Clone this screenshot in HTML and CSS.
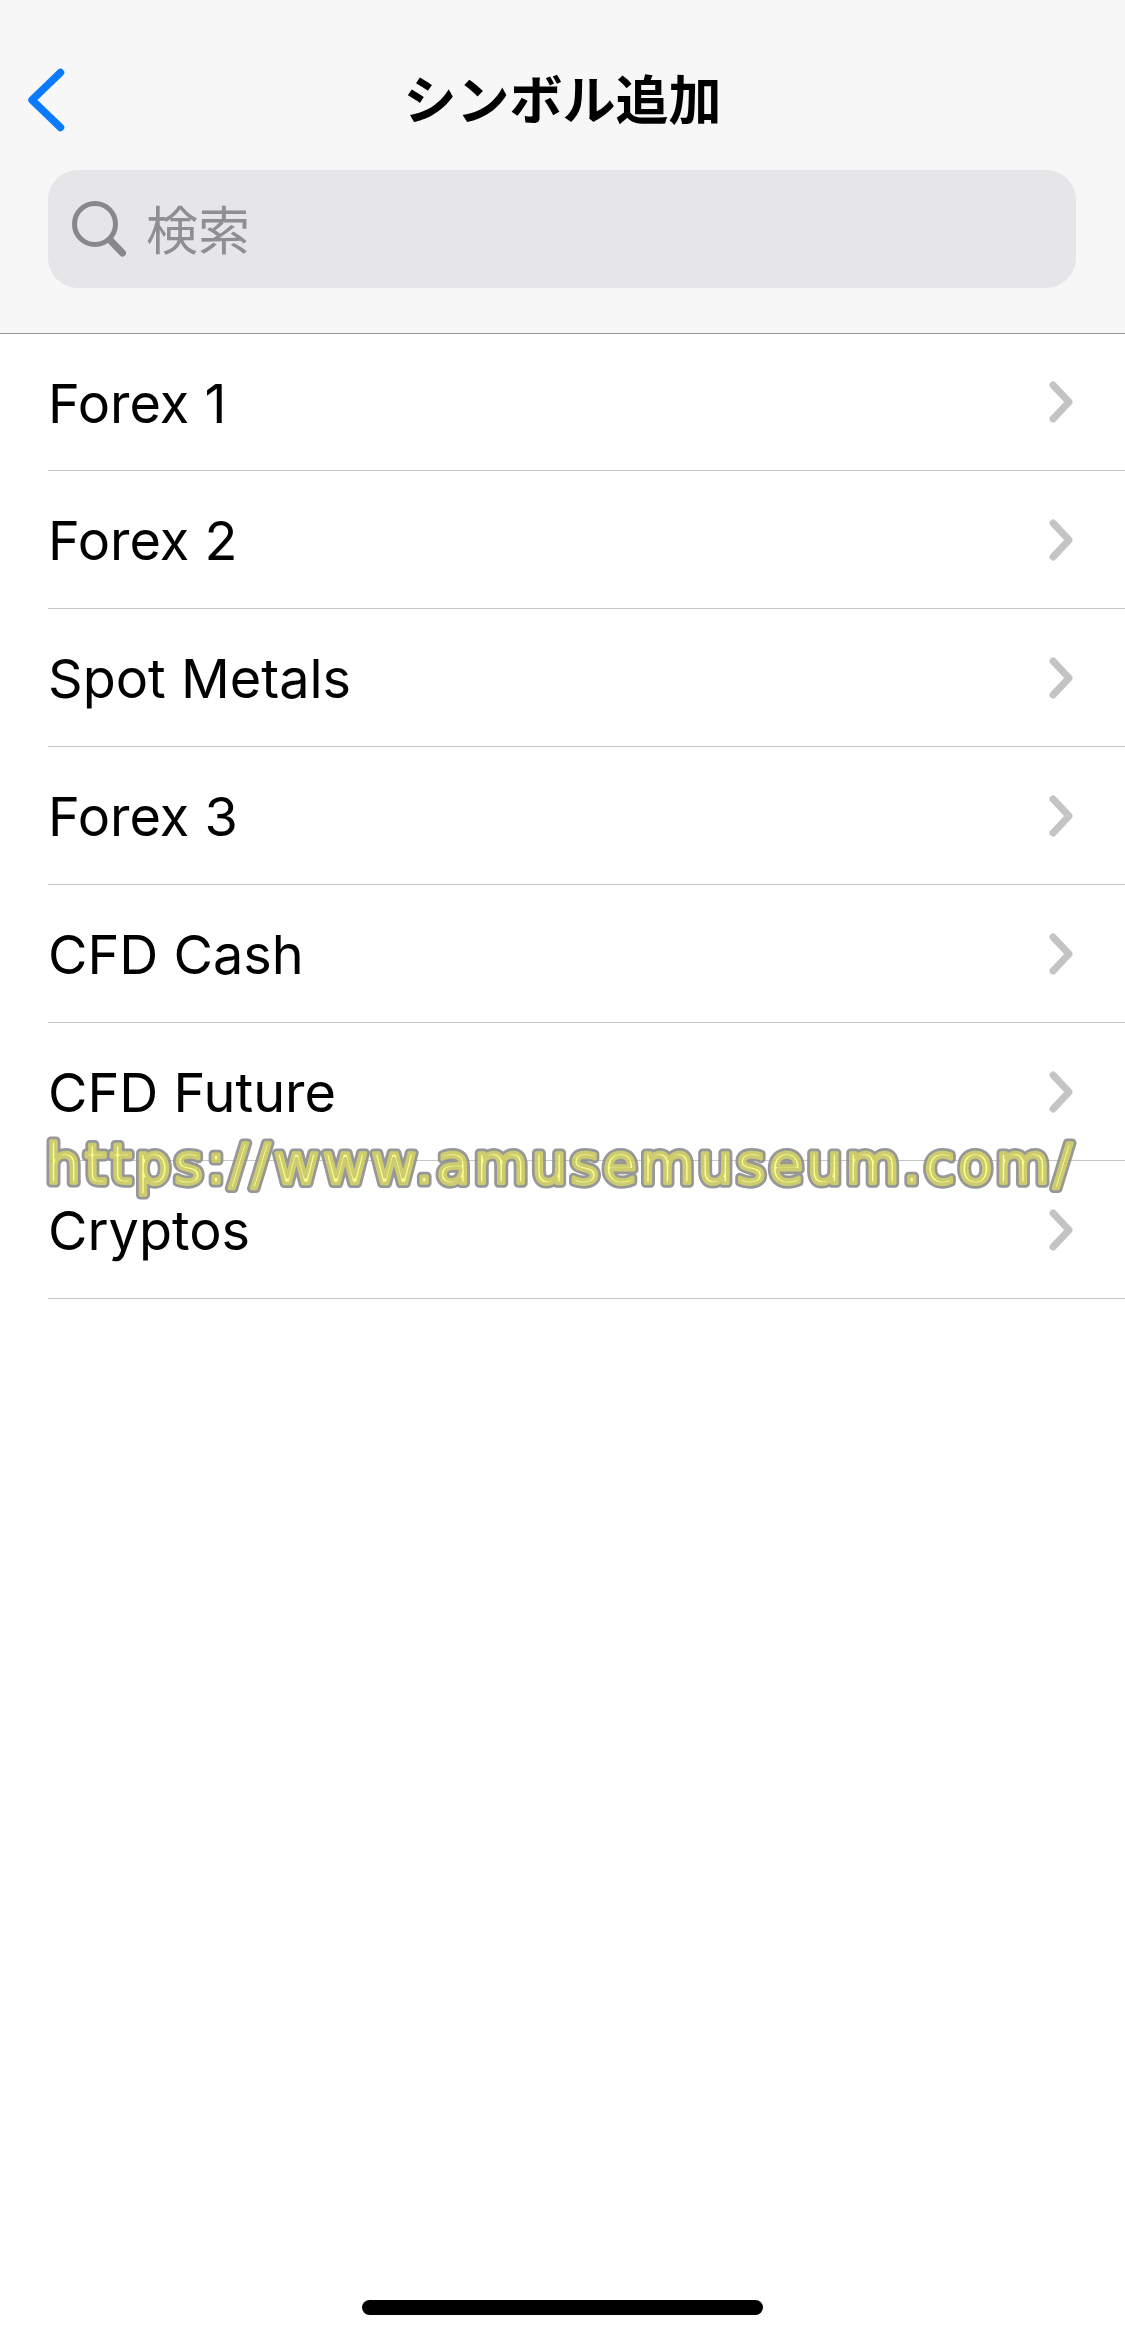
FILE: index.html
```html
<!DOCTYPE html>
<html lang="ja">
<head>
    <meta charset="UTF-8">
    <meta name="viewport" content="width=device-width, initial-scale=1.0">
    <title>シンボル追加</title>
    <link rel="stylesheet" href="styles.css">
</head>
<body>
    <div class="screen">
        <header class="top-bar">
            <div class="nav-row">
                <svg class="back-icon" viewBox="0 0 38 64" width="38" height="64">
                    <path d="M33.5 4.5 L5 32 L33.5 59.5" fill="none" stroke="#0a7aff" stroke-width="7.5" stroke-linecap="round" stroke-linejoin="round"/>
                </svg>
                <h1 class="title">シンボル追加</h1>
            </div>
            <div class="search-box">
                <svg class="search-icon" viewBox="0 0 54 56" width="54" height="56">
                    <circle cx="23" cy="23" r="20.5" fill="none" stroke="#87878c" stroke-width="5"/>
                    <path d="M38 39 L50.5 52" fill="none" stroke="#87878c" stroke-width="7" stroke-linecap="round"/>
                </svg>
                <span class="search-text">検索</span>
            </div>
        </header>

        <ul class="symbol-list">
            <li class="symbol-row"><span>Forex 1</span><svg class="chevron" viewBox="0 0 24 42" width="24" height="42"><path d="M4 4 L20 21 L4 38" fill="none" stroke="#c4c4c7" stroke-width="7" stroke-linecap="round" stroke-linejoin="round"/></svg></li>
            <li class="symbol-row"><span>Forex 2</span><svg class="chevron" viewBox="0 0 24 42" width="24" height="42"><path d="M4 4 L20 21 L4 38" fill="none" stroke="#c4c4c7" stroke-width="7" stroke-linecap="round" stroke-linejoin="round"/></svg></li>
            <li class="symbol-row"><span>Spot Metals</span><svg class="chevron" viewBox="0 0 24 42" width="24" height="42"><path d="M4 4 L20 21 L4 38" fill="none" stroke="#c4c4c7" stroke-width="7" stroke-linecap="round" stroke-linejoin="round"/></svg></li>
            <li class="symbol-row"><span>Forex 3</span><svg class="chevron" viewBox="0 0 24 42" width="24" height="42"><path d="M4 4 L20 21 L4 38" fill="none" stroke="#c4c4c7" stroke-width="7" stroke-linecap="round" stroke-linejoin="round"/></svg></li>
            <li class="symbol-row"><span>CFD Cash</span><svg class="chevron" viewBox="0 0 24 42" width="24" height="42"><path d="M4 4 L20 21 L4 38" fill="none" stroke="#c4c4c7" stroke-width="7" stroke-linecap="round" stroke-linejoin="round"/></svg></li>
            <li class="symbol-row"><span>CFD Future</span><svg class="chevron" viewBox="0 0 24 42" width="24" height="42"><path d="M4 4 L20 21 L4 38" fill="none" stroke="#c4c4c7" stroke-width="7" stroke-linecap="round" stroke-linejoin="round"/></svg></li>
            <li class="symbol-row"><span>Cryptos</span><svg class="chevron" viewBox="0 0 24 42" width="24" height="42"><path d="M4 4 L20 21 L4 38" fill="none" stroke="#c4c4c7" stroke-width="7" stroke-linecap="round" stroke-linejoin="round"/></svg></li>
        </ul>

        <div class="home-bar"></div>

        <svg class="watermark" viewBox="0 0 1060 70" width="1060" height="70">
            <text class="watermark-outline" x="0" y="54">https://www.amusemuseum.com/</text>
            <text class="watermark-fill" x="0" y="54" aria-hidden="true">https://www.amusemuseum.com/</text>
        </svg>
    </div>
</body>
</html>
```

FILE: styles.css
```css
* {
    box-sizing: border-box;
}

body {
    margin: 0;
    background-color: white;
    font-family: Inter, "Noto Sans CJK JP", sans-serif;
    color: black;
}

.screen {
    position: relative;
    display: flex;
    flex-direction: column;
    width: 1125px;
    height: 2339px;
    overflow: hidden;
}

.top-bar {
    height: 334px;
    padding-top: 68px;
    background-color: #f7f7f7;
    border-bottom: 1px solid #98989a;
}

.nav-row {
    position: relative;
    display: flex;
    justify-content: center;
    align-items: center;
    height: 64px;
}

.back-icon {
    position: absolute;
    left: 27px;
    top: 0;
}

.title {
    margin: -6px 0 0;
    font-family: "Noto Sans CJK JP", sans-serif;
    font-size: 53px;
    font-weight: 700;
    line-height: 64px;
}

.search-box {
    display: flex;
    align-items: center;
    gap: 20px;
    width: 1028px;
    height: 118px;
    margin: 38px 0 0 48px;
    padding-left: 24px;
    background-color: #e6e6e8;
    border-radius: 30px;
}

.search-text {
    margin-top: -3px;
    font-family: "Noto Sans CJK JP", sans-serif;
    font-size: 52px;
    color: #8e8e93;
}

.symbol-list {
    margin: 0;
    padding: 0;
    list-style: none;
}

.symbol-row {
    display: flex;
    justify-content: space-between;
    align-items: center;
    height: 138px;
    margin-left: 48px;
    padding-right: 52px;
    border-bottom: 1px solid #c6c6c8;
    font-size: 54px;
}

.symbol-row:first-child {
    height: 137px;
}

.symbol-row span {
    margin-top: 2px;
}

.home-bar {
    width: 401px;
    height: 15px;
    margin: auto auto 24px;
    background-color: black;
    border-radius: 8px;
}

.watermark {
    position: absolute;
    left: 46px;
    top: 1129px;
    overflow: visible;
    opacity: 0.92;
    font-family: "DejaVu Sans", sans-serif;
    font-size: 55px;
    letter-spacing: 3.85px;
    stroke-linejoin: round;
    stroke-linecap: round;
}

.watermark-outline {
    fill: #8f8f8f;
    stroke: #8f8f8f;
    stroke-width: 9px;
}

.watermark-fill {
    fill: #fdfd86;
    stroke: #c9c964;
    stroke-width: 3.5px;
}
```
